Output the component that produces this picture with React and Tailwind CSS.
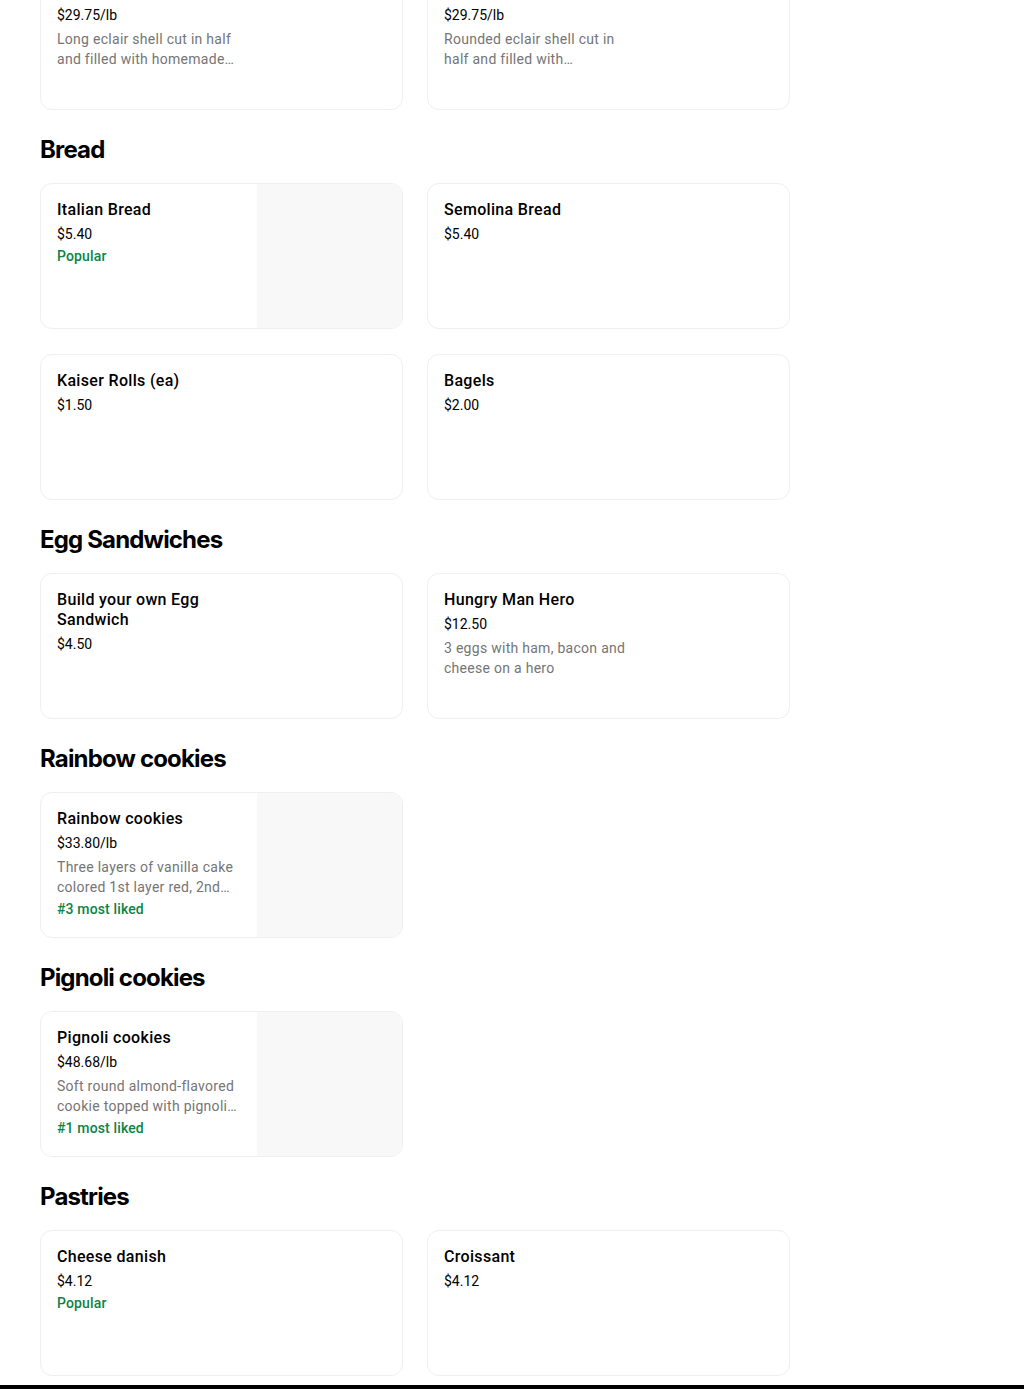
import React from "react";

const sections = [
  {
    title: null,
    items: [
      { name: "Eclair", price: "$29.75/lb", desc: "Long eclair shell cut in half and filled with homemade cream and topped with chocolate" },
      { name: "Round Eclair", price: "$29.75/lb", desc: "Rounded eclair shell cut in half and filled with homemade cream" },
    ],
  },
  {
    title: "Bread",
    items: [
      { name: "Italian Bread", price: "$5.40", badge: "Popular", image: true },
      { name: "Semolina Bread", price: "$5.40" },
      { name: "Kaiser Rolls (ea)", price: "$1.50" },
      { name: "Bagels", price: "$2.00" },
    ],
  },
  {
    title: "Egg Sandwiches",
    items: [
      { name: "Build your own Egg Sandwich", price: "$4.50" },
      { name: "Hungry Man Hero", price: "$12.50", desc: "3 eggs with ham, bacon and cheese on a hero" },
    ],
  },
  {
    title: "Rainbow cookies",
    items: [
      { name: "Rainbow cookies", price: "$33.80/lb", desc: "Three layers of vanilla cake colored 1st layer red, 2nd layer white and 3rd layer green", badge: "#3 most liked", image: true },
    ],
  },
  {
    title: "Pignoli cookies",
    items: [
      { name: "Pignoli cookies", price: "$48.68/lb", desc: "Soft round almond-flavored cookie topped with pignoli nuts", badge: "#1 most liked", image: true },
    ],
  },
  {
    title: "Pastries",
    items: [
      { name: "Cheese danish", price: "$4.12", badge: "Popular" },
      { name: "Croissant", price: "$4.12" },
    ],
  },
];

function Card({ item }) {
  return (
    <div className="box-border flex h-[146px] overflow-hidden rounded-[12px] border border-[#efefef] bg-white">
      <div className="flex flex-1 flex-col p-4">
        <div className="w-[184px]">
          <div className="text-[16px] font-medium leading-5 tracking-[0.02em] text-black">{item.name}</div>
          <div className="mt-1 text-[14px] leading-5 text-black">{item.price}</div>
          {item.desc && (
            <div className="mt-1 line-clamp-2 text-[14px] leading-5 tracking-[0.02em] text-[#757575]">{item.desc}</div>
          )}
          {item.badge && (
            <div className="mt-[2px] text-[14px] font-medium leading-5 tracking-[0.01em] text-[#0e8345]">{item.badge}</div>
          )}
        </div>
      </div>
      {item.image && <div className="w-[146px] shrink-0 bg-[#f8f8f8]" />}
    </div>
  );
}

export default function App() {
  return (
    <div className="min-h-[1389px] bg-white" style={{ fontFamily: "Roboto, 'Liberation Sans', sans-serif" }}>
      <div className="mt-[-36px] w-[790px] pl-10">
        {sections.map((s, i) => (
          <div key={i}>
            {s.title && (
              <h2
                className="mb-[17px] mt-6 text-[24px] font-bold leading-8 tracking-[-0.035em] text-black"
                style={{ fontFamily: "Inter, 'Liberation Sans', sans-serif" }}
              >
                {s.title}
              </h2>
            )}
            <div className="grid grid-cols-2 gap-x-6 gap-y-[25px]">
              {s.items.map((it, j) => (
                <Card key={j} item={it} />
              ))}
            </div>
          </div>
        ))}
      </div>
      <div className="mt-[9px] h-[200px] bg-black" />
    </div>
  );
}
